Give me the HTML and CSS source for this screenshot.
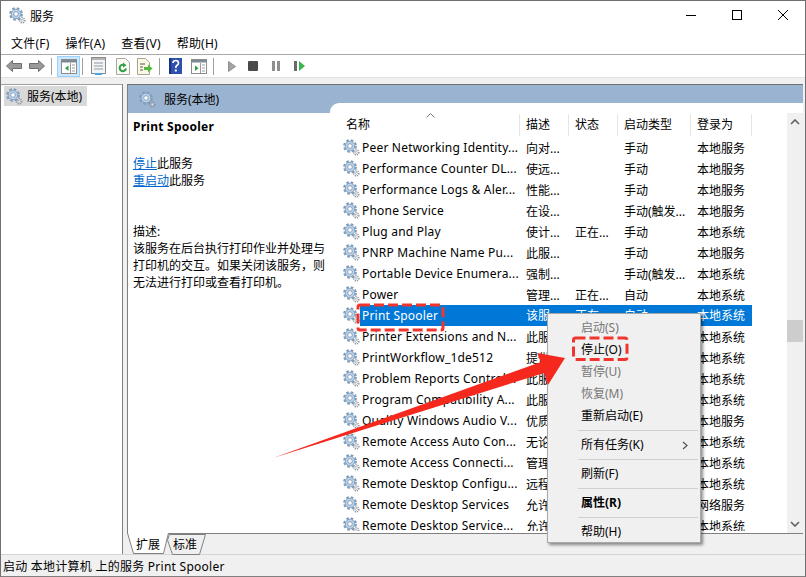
FILE: index.html
```html
<!DOCTYPE html>
<html lang="zh-CN">
<head>
    <meta charset="UTF-8">
    <title>服务</title>
    <link rel="stylesheet" href="styles.css">
</head>
<body>
    <svg width="0" height="0" class="defs">
        <symbol id="gear" viewBox="0 0 17 17">
            <circle cx="7" cy="7" r="5.7" fill="none" stroke="#7f9cba" stroke-width="2.4" stroke-dasharray="2.5 2"/>
            <circle cx="7" cy="7" r="4.8" fill="#bcd2e8" stroke="#88a3bf" stroke-width="1"/>
            <circle cx="7" cy="7" r="2.3" fill="#fff" stroke="#7592ae" stroke-width="0.8"/>
            <circle cx="13.3" cy="13.3" r="2.6" fill="none" stroke="#8a949d" stroke-width="1.4" stroke-dasharray="1.2 1"/>
            <circle cx="13.3" cy="13.3" r="1.1" fill="#fff" stroke="#98a1a9" stroke-width="0.7"/>
        </symbol>
    </svg>

    <div class="window">
        <div class="titlebar">
            <svg class="gear gear-title"><use href="#gear"/></svg>
            <span class="title">服务</span>
            <div class="win-btns">
                <svg width="12" height="12" viewBox="0 0 12 12"><path d="M1 6.5H11" stroke="#000" fill="none"/></svg>
                <svg width="12" height="12" viewBox="0 0 12 12"><rect x="1.5" y="1.5" width="9" height="9" stroke="#000" fill="none"/></svg>
                <svg width="12" height="12" viewBox="0 0 12 12"><path d="M1 1L11 11M11 1L1 11" stroke="#000" fill="none"/></svg>
            </div>
        </div>

        <div class="menubar">
            <span>文件(F)</span>
            <span>操作(A)</span>
            <span>查看(V)</span>
            <span>帮助(H)</span>
        </div>

        <div class="toolbar">
            <svg class="tool tool-back" width="16" height="12" viewBox="0 0 16 12"><path d="M0.5 6L6.5 0.5V3.5H15.5V8.5H6.5V11.5Z" fill="#9a9a9a" stroke="#6e6e6e"/></svg>
            <svg class="tool tool-fwd" width="16" height="12" viewBox="0 0 16 12"><path d="M15.5 6L9.5 0.5V3.5H0.5V8.5H9.5V11.5Z" fill="#9a9a9a" stroke="#6e6e6e"/></svg>
            <i class="sep sep-a"></i>
            <div class="tool-on">
                <svg width="16" height="15" viewBox="0 0 16 15"><rect x="0.5" y="0.5" width="15" height="14" fill="#fff" stroke="#8c8c8c"/><rect x="1" y="1" width="14" height="2.5" fill="#7d8a96"/><rect x="9" y="4" width="1" height="10" fill="#9a9a9a"/><path d="M7.5 6.5V12L4 9.2Z" fill="#2f9e44"/><path d="M11 6H14M11 9H14M11 12H14" stroke="#9a9a9a"/></svg>
            </div>
            <i class="sep sep-b"></i>
            <svg class="tool tool-props" width="15" height="18" viewBox="0 0 15 18"><rect x="0.5" y="0.5" width="14" height="16" fill="#f4f4f4" stroke="#8a8a8a"/><rect x="1" y="1" width="13" height="2" fill="#b5b5b5"/><path d="M3 6H12M3 9H12M3 12H12" stroke="#8c9aa8"/><rect x="4" y="16" width="7" height="2" fill="#4aa3df"/></svg>
            <svg class="tool tool-refresh" width="14" height="17" viewBox="0 0 14 17"><path d="M0.5 0.5H9.5L13.5 4.5V16.5H0.5Z" fill="#fbfbf3" stroke="#a8a8a0"/><path d="M10 10.5A3.2 3.2 0 1 1 8.5 7.2" fill="none" stroke="#2f9e44" stroke-width="2"/><path d="M7 4.5L10.5 7.2L7 9.5Z" fill="#2f9e44"/></svg>
            <svg class="tool tool-export" width="16" height="17" viewBox="0 0 16 17"><path d="M0.5 0.5H8.5L12.5 4.5V16.5H0.5Z" fill="#fbf8e6" stroke="#a8a490"/><path d="M3 6H8M3 9H6M3 12H6" stroke="#555"/><path d="M7 9H11V6.5L15.5 10.5L11 14.5V12H7Z" fill="#55b83f"/></svg>
            <i class="sep sep-c"></i>
            <svg class="tool tool-help" width="13" height="16" viewBox="0 0 13 16"><rect width="13" height="16" fill="#2c4fb0"/><rect x="0" y="0" width="2" height="16" fill="#1a3484"/><path d="M4 5Q4 2.5 6.8 2.5Q9.5 2.5 9.5 5Q9.5 6.5 7.8 7.5Q6.8 8.2 6.8 10" fill="none" stroke="#fff" stroke-width="1.7"/><rect x="5.8" y="11.5" width="2" height="2" fill="#fff"/></svg>
            <svg class="tool tool-panel" width="16" height="15" viewBox="0 0 16 15"><rect x="0.5" y="0.5" width="15" height="14" fill="#fff" stroke="#8c8c8c"/><rect x="1" y="1" width="14" height="2.5" fill="#7d8a96"/><rect x="9" y="4" width="1" height="10" fill="#9a9a9a"/><path d="M4 6.5V12L7.5 9.2Z" fill="#2f9e44"/><path d="M11 6H14M11 9H14M11 12H14" stroke="#9a9a9a"/></svg>
            <i class="sep sep-d"></i>
            <svg class="tool tool-play" width="8" height="11" viewBox="0 0 8 11"><path d="M0.5 0.5L7.5 5.5L0.5 10.5Z" fill="#a4a4a4" stroke="#8f8f8f"/></svg>
            <svg class="tool tool-stop" width="10" height="10" viewBox="0 0 10 10"><rect width="10" height="10" rx="1" fill="#4a4a4a"/></svg>
            <svg class="tool tool-pause" width="8" height="10" viewBox="0 0 8 10"><rect width="3" height="10" fill="#8f8f8f"/><rect x="5" width="3" height="10" fill="#8f8f8f"/></svg>
            <svg class="tool tool-resume" width="11" height="10" viewBox="0 0 11 10"><rect width="3" height="10" fill="#6a6a6a"/><path d="M5 0L11 5L5 10Z" fill="#39b54a"/></svg>
        </div>

        <div class="content">
            <div class="tree">
                <div class="tree-item">
                    <svg class="gear"><use href="#gear"/></svg>
                    <span>服务(本地)</span>
                </div>
            </div>

            <div class="main">
                <div class="pane">
                    <div class="pane-head">
                        <svg class="gear"><use href="#gear"/></svg>
                        <span>服务(本地)</span>
                    </div>
                    <div class="pane-body">
                        <div class="detail">
                            <div class="detail-name">Print Spooler</div>
                            <div class="detail-links">
                                <div><a>停止</a>此服务</div>
                                <div><a>重启动</a>此服务</div>
                            </div>
                            <div class="detail-desc">
                                描述:<br>
                                该服务在后台执行打印作业并处理与打印机的交互。如果关闭该服务，则无法进行打印或查看打印机。
                            </div>
                        </div>

                        <div class="list">
                            <div class="table">
                                <div class="row thead">
                                    <span class="th-name">名称</span>
                                    <span>描述</span>
                                    <span>状态</span>
                                    <span>启动类型</span>
                                    <span>登录为</span>
                                    <svg class="sort" width="9" height="5" viewBox="0 0 9 5"><path d="M0.5 4.5L4.5 0.5L8.5 4.5" fill="none" stroke="#777"/></svg>
                                </div>
                                <div class="rows">
                                    <div class="row"><svg class="gear"><use href="#gear"/></svg><span class="name">Peer Networking Identity...</span><span>向对...</span><span></span><span>手动</span><span>本地服务</span></div>
                                    <div class="row"><svg class="gear"><use href="#gear"/></svg><span class="name">Performance Counter DL...</span><span>使远...</span><span></span><span>手动</span><span>本地服务</span></div>
                                    <div class="row"><svg class="gear"><use href="#gear"/></svg><span class="name">Performance Logs &amp; Aler...</span><span>性能...</span><span></span><span>手动</span><span>本地服务</span></div>
                                    <div class="row"><svg class="gear"><use href="#gear"/></svg><span class="name">Phone Service</span><span>在设...</span><span></span><span>手动(触发...</span><span>本地服务</span></div>
                                    <div class="row"><svg class="gear"><use href="#gear"/></svg><span class="name">Plug and Play</span><span>使计...</span><span>正在...</span><span>手动</span><span>本地系统</span></div>
                                    <div class="row"><svg class="gear"><use href="#gear"/></svg><span class="name">PNRP Machine Name Pu...</span><span>此服...</span><span></span><span>手动</span><span>本地服务</span></div>
                                    <div class="row"><svg class="gear"><use href="#gear"/></svg><span class="name">Portable Device Enumera...</span><span>强制...</span><span></span><span>手动(触发...</span><span>本地系统</span></div>
                                    <div class="row"><svg class="gear"><use href="#gear"/></svg><span class="name">Power</span><span>管理...</span><span>正在...</span><span>自动</span><span>本地系统</span></div>
                                    <div class="row selected"><svg class="gear"><use href="#gear"/></svg><span class="name">Print Spooler</span><span>该服...</span><span>正在...</span><span>自动</span><span>本地系统</span></div>
                                    <div class="row"><svg class="gear"><use href="#gear"/></svg><span class="name">Printer Extensions and N...</span><span>此服...</span><span></span><span>手动</span><span>本地系统</span></div>
                                    <div class="row"><svg class="gear"><use href="#gear"/></svg><span class="name">PrintWorkflow_1de512</span><span>提供...</span><span></span><span>手动</span><span>本地系统</span></div>
                                    <div class="row"><svg class="gear"><use href="#gear"/></svg><span class="name">Problem Reports Control...</span><span>此服...</span><span></span><span>手动</span><span>本地系统</span></div>
                                    <div class="row"><svg class="gear"><use href="#gear"/></svg><span class="name">Program Compatibility A...</span><span>此服...</span><span></span><span>手动</span><span>本地系统</span></div>
                                    <div class="row"><svg class="gear"><use href="#gear"/></svg><span class="name">Quality Windows Audio V...</span><span>优质...</span><span></span><span>手动</span><span>本地服务</span></div>
                                    <div class="row"><svg class="gear"><use href="#gear"/></svg><span class="name">Remote Access Auto Con...</span><span>无论...</span><span></span><span>手动</span><span>本地系统</span></div>
                                    <div class="row"><svg class="gear"><use href="#gear"/></svg><span class="name">Remote Access Connecti...</span><span>管理...</span><span></span><span>手动</span><span>本地系统</span></div>
                                    <div class="row"><svg class="gear"><use href="#gear"/></svg><span class="name">Remote Desktop Configu...</span><span>远程...</span><span></span><span>手动</span><span>本地系统</span></div>
                                    <div class="row"><svg class="gear"><use href="#gear"/></svg><span class="name">Remote Desktop Services</span><span>允许...</span><span></span><span>手动</span><span>网络服务</span></div>
                                    <div class="row"><svg class="gear"><use href="#gear"/></svg><span class="name">Remote Desktop Service...</span><span>允许...</span><span></span><span>手动</span><span>本地系统</span></div>
                                </div>
                            </div>
                            <div class="scrollbar">
                                <svg width="10" height="6" viewBox="0 0 10 6"><path d="M1 5L5 1L9 5" fill="none" stroke="#606060" stroke-width="1.6"/></svg>
                                <div class="thumb"></div>
                                <svg width="10" height="6" viewBox="0 0 10 6"><path d="M1 1L5 5L9 1" fill="none" stroke="#606060" stroke-width="1.6"/></svg>
                            </div>
                        </div>
                    </div>
                </div>
                <div class="tabs">
                    <div class="tab tab-ext">
                        <svg width="42" height="21" viewBox="0 0 42 21"><path d="M0.5 0L6.5 20.5H36.5L41.5 0" fill="#fff" stroke="#808080"/></svg>
                        <span>扩展</span>
                    </div>
                    <div class="tab tab-std">
                        <svg width="40" height="21" viewBox="0 0 40 21"><path d="M2.5 0.5L0.5 6L5.5 20.5H32.5L38.5 0.5Z" fill="#f0f0f0" stroke="#808080"/></svg>
                        <span>标准</span>
                    </div>
                </div>
            </div>
        </div>

        <div class="statusbar">
            <span class="status-text">启动 本地计算机 上的服务 Print Spooler</span>
            <i></i>
            <i></i>
        </div>

        <!-- right click menu -->
        <div class="context">
            <div class="item off">启动(S)</div>
            <div class="item">停止(O)</div>
            <div class="item off">暂停(U)</div>
            <div class="item off">恢复(M)</div>
            <div class="item">重新启动(E)</div>
            <div class="line"></div>
            <div class="item">所有任务(K)
                <svg width="6" height="9" viewBox="0 0 6 9"><path d="M1 1L5 4.5L1 8" fill="none" stroke="#555" stroke-width="1.2"/></svg>
            </div>
            <div class="line"></div>
            <div class="item">刷新(F)</div>
            <div class="line"></div>
            <div class="item bold">属性(R)</div>
            <div class="line"></div>
            <div class="item">帮助(H)</div>
        </div>

        <!-- red marks drawn over the screenshot -->
        <svg class="marks" width="806" height="577" viewBox="0 0 806 577">
            <rect x="358" y="305" width="85" height="25" rx="2"/>
            <rect x="573.5" y="338" width="53.5" height="21.5" rx="2"/>
            <path d="M273 458L541 362L537 353L565 358L548 385L544 373Z"/>
        </svg>
    </div>
</body>
</html>
```

FILE: styles.css
```css
* {
    box-sizing: border-box;
}
html, body {
    margin: 0;
    padding: 0;
}
body {
    font-family: "Noto Sans", "Noto Sans CJK SC", sans-serif;
    font-size: 12px;
    color: #000;
    background: #fff;
}
.defs {
    position: absolute;
}
.gear {
    width: 17px;
    height: 17px;
    flex: none;
}

.window {
    position: relative;
    width: 806px;
    height: 577px;
    display: flex;
    flex-direction: column;
    border: 1px solid #707070;
    border-bottom-color: #808080;
    background: #f0f0f0;
    overflow: hidden;
}

.titlebar {
    height: 31px;
    flex: none;
    display: flex;
    align-items: center;
    background: #fff;
    padding: 0 0 2px 8px;
}
.title {
    margin-left: 4px;
}
.win-btns {
    margin-left: auto;
    display: flex;
    gap: 34px;
    padding: 0 16px 1px 0;
}

.menubar {
    height: 23px;
    flex: none;
    display: flex;
    align-items: center;
    gap: 16px;
    padding-left: 10px;
    background: #fff;
    border-bottom: 1px solid #a9a9a9;
    letter-spacing: 0.2px;
}

.toolbar {
    height: 23px;
    flex: none;
    display: flex;
    align-items: center;
    padding-left: 5px;
    background: #fff;
    border-bottom: 1px solid #e0e0e0;
}
.tool {
    flex: none;
}
.tool-fwd { margin-left: 7px; }
.sep {
    width: 1px;
    height: 17px;
    flex: none;
    background: #a0a0a0;
}
.sep-a { margin: 0 5px 0 6px; }
.sep-b { margin: 0 8px 0 2px; }
.sep-c { margin: 0 9px 0 6px; }
.sep-d { margin: 0 14px 0 6px; }
.tool-on {
    width: 23px;
    height: 21px;
    flex: none;
    display: flex;
    align-items: center;
    justify-content: center;
    background: #cce8ff;
    border: 1px solid #99d1ff;
}
.tool-refresh { margin-left: 10px; }
.tool-export { margin-left: 7px; }
.tool-panel { margin-left: 9px; }
.tool-stop { margin-left: 12px; }
.tool-pause { margin-left: 14px; }
.tool-resume { margin-left: 14px; }

.content {
    flex: 1;
    min-height: 0;
    display: flex;
    padding-top: 6px;
}
.tree {
    width: 122px;
    flex: none;
    background: #fff;
    border-top: 1px solid #a0a0a0;
    border-right: 1px solid #808080;
    padding: 1px 0 0 3px;
}
.tree-item {
    width: 83px;
    height: 20px;
    display: flex;
    align-items: center;
    gap: 4px;
    padding-left: 2px;
    background: #d9d9d9;
}
.main {
    width: 676px;
    margin-left: 4px;
    display: flex;
    flex-direction: column;
}
.pane {
    flex: 1;
    min-height: 0;
    display: flex;
    flex-direction: column;
    border-top: 1px solid #707070;
    border-left: 1px solid #808080;
    background: #fff;
}
.pane-head {
    height: 28px;
    flex: none;
    display: flex;
    align-items: center;
    gap: 8px;
    padding-left: 11px;
    background: #9ab3d0;
}
.pane-body {
    flex: 1;
    min-height: 0;
    display: flex;
}

.detail {
    width: 202px;
    flex: none;
    padding: 5px 4px 0 5px;
    line-height: 17px;
}
.detail-name {
    font-weight: bold;
    height: 17px;
    letter-spacing: 0.25px;
}
.detail-links {
    margin-top: 20px;
}
.detail-links a {
    color: #0066cc;
    text-decoration: underline;
}
.detail-desc {
    margin-top: 34px;
}

.list {
    flex: 1;
    min-width: 0;
    display: flex;
    margin-top: -10px;
    padding-top: 10px;
    background: #fff;
    border-top-left-radius: 9px;
    position: relative;
}
.table {
    flex: 1;
    min-width: 0;
    padding-left: 10px;
    overflow: hidden;
}
.row {
    display: grid;
    grid-template-columns: 20px 160px 49px 49px 73px 61px;
    height: 21px;
    align-items: center;
    white-space: nowrap;
}
.row .gear {
    margin-left: 3px;
}
.row span {
    padding-left: 6px;
    overflow: hidden;
}
.row .name {
    padding-left: 2px;
    height: 21px;
    line-height: 21px;
    letter-spacing: 0.2px;
}
.selected span {
    background: #0078d7;
    color: #fff;
    height: 21px;
    line-height: 21px;
}
.thead {
    position: relative;
    height: 24px;
    grid-template-columns: 180px 49px 49px 73px 61px;
}
.thead span {
    height: 22px;
    line-height: 22px;
    border-right: 1px solid #e5e5e5;
}
.sort {
    position: absolute;
    left: 86px;
    top: 0;
}
.rows {
    height: 394px;
    overflow: hidden;
}
.scrollbar {
    width: 16px;
    flex: none;
    display: flex;
    flex-direction: column;
    align-items: center;
    padding: 6px 0;
    background: #f0f0f0;
}
.thumb {
    width: 16px;
    height: 22px;
    margin-top: 195px;
    margin-bottom: auto;
    background: #cdcdcd;
}

.tabs {
    height: 21px;
    flex: none;
    display: flex;
    border-top: 1px solid #808080;
}
.tab {
    position: relative;
    height: 20px;
    display: flex;
    align-items: center;
}
.tab svg {
    position: absolute;
    left: 0;
    top: -1px;
}
.tab span {
    position: relative;
}
.tab-ext {
    width: 40px;
    padding-left: 9px;
    z-index: 1;
}
.tab-std {
    width: 38px;
    padding-left: 6px;
}
.tab-std svg {
    top: 0;
}

.statusbar {
    height: 22px;
    flex: none;
    display: flex;
    align-items: center;
    padding-left: 2px;
    border-top: 1px solid #d4d4d4;
}
.status-text {
    width: 581px;
    flex: none;
    letter-spacing: 0.25px;
}
.statusbar i {
    width: 1px;
    height: 19px;
    background: #d4d4d4;
    margin-right: 132px;
}

.context {
    position: absolute;
    left: 546px;
    top: 312px;
    width: 154px;
    height: 230px;
    padding: 3px 2px 0 2px;
    background: #f0f0f0;
    border: 1px solid #a8a8a8;
    box-shadow: 2px 2px 3px rgba(0, 0, 0, 0.45);
}
.item {
    height: 22px;
    line-height: 22px;
    padding: 0 10px 0 31px;
    display: flex;
    align-items: center;
    justify-content: space-between;
}
.item.off {
    color: #777;
}
.item.bold {
    font-weight: bold;
}
.line {
    height: 1px;
    margin: 3px 0 3px 28px;
    background: #d0d0d0;
}

.marks {
    position: absolute;
    left: -1px;
    top: -1px;
    pointer-events: none;
}
.marks rect {
    fill: none;
    stroke: #f0352f;
    stroke-width: 3;
    stroke-dasharray: 10 4;
}
.marks path {
    fill: #f5281e;
}
```
